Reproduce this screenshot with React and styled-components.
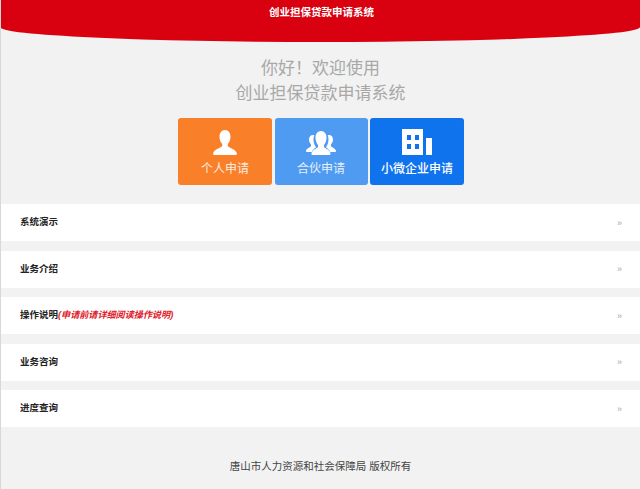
import React from 'react'
import styled, { createGlobalStyle } from 'styled-components'

const Global = createGlobalStyle`
  html, body {
    margin: 0;
    padding: 0;
    background: #f2f2f2;
  }
  body {
    font-family: "Liberation Sans", "Noto Sans CJK SC", sans-serif;
  }
`

const Page = styled.div`
  width: 640px;
  height: 489px;
  overflow: hidden;
  box-sizing: border-box;
  border-left: 1px solid #d8d8d8;
  display: flex;
  flex-direction: column;
  background: #f2f2f2;
`

const Header = styled.header`
  height: 42px;
  margin-left: -1px;
  padding-left: 3px;
  flex: none;
  background: #d9000f;
  border-radius: 0 0 50% 50% / 0 0 15px 15px;
  color: #fff;
  font-size: 10.5px;
  font-weight: 700;
  line-height: 24px;
  text-align: center;
`

const Welcome = styled.div`
  margin-top: 14px;
  color: #a8a8a8;
  font-size: 17px;
  line-height: 25px;
  text-align: center;
`

const Buttons = styled.div`
  margin-top: 12px;
  display: flex;
  justify-content: center;
  gap: 2.5px;
  padding-left: 1px;
`

const Tile = styled.div`
  width: ${p => p.$w || 94}px;
  height: 67px;
  border-radius: 3px;
  background: ${p => p.$bg};
  color: #fff;
  display: flex;
  flex-direction: column;
  align-items: center;
  box-sizing: border-box;
  padding-top: 11px;
`

const TileIcon = styled.svg`
  width: 30px;
  height: 27px;
  fill: #fff;
  flex: none;
`

const TileLabel = styled.div`
  margin-top: 5px;
  font-size: 12px;
  line-height: 16px;
  font-weight: ${p => p.$soft ? 400 : 500};
  opacity: ${p => p.$soft ? 0.85 : 1};
`

const Menu = styled.div`
  margin-top: 19px;
  display: flex;
  flex-direction: column;
  gap: 9.5px;
`

const Row = styled.div`
  height: 37px;
  flex: none;
  background: #fff;
  display: flex;
  align-items: center;
  justify-content: space-between;
  padding: 0 18px 0 19px;
`

const RowTitle = styled.div`
  font-size: 9.5px;
  font-weight: 700;
  color: #222;
  margin-top: -3px;
`

const Hint = styled.span`
  color: #e0202a;
  font-size: 9.1px;
  font-style: italic;
`

const Chevron = styled.span`
  color: #a8a8a8;
  font-size: 9px;
`

const Footer = styled.footer`
  margin-top: 31px;
  color: #444;
  font-size: 10.5px;
  text-align: center;
`

const PersonIcon = () => (
  <TileIcon viewBox="0 0 30 27">
    <path d="M15 1c-3.600 0-5.500 3-5.500 6.500 0 3 1 5.500 2.700 7.500v2c0 1.500-7.500 2.500-9 7-.3 1 0 2 1 2h21.600c1 0 1.300-1 1-2-1.500-4.500-9-5.500-9-7v-2c1.700-2 2.700-4.500 2.700-7.500C20.500 4 18.600 1 15 1z" />
  </TileIcon>
)

const GroupIcon = () => (
  <TileIcon viewBox="0 0 30 27">
    <path d="M7 6c-2.500 0-4 2-4 4.500 0 2 .8 3.500 2 5v1.500C5 18 1 19 0 21.500 0 22.500.500 23 1 23h5c.5-2 2-3.500 4-4.500-1.500-2.500-2.500-5-2.500-8 0-1.500.2-3 .8-4.300C8 6 7.500 6 7 6zM23 6c-.5 0-1 0-1.300.2.600 1.300.800 2.800.800 4.300 0 3-1 5.500-2.500 8 2 1 3.500 2.500 4 4.500h5c.5 0 1-.5 1-1.500C29 19 25 18 25 17v-1.500c1.200-1.500 2-3 2-5C27 8 25.500 6 23 6z" />
    <path d="M15 2c-3.500 0-5.500 3-5.500 6.500 0 3 1 5.500 2.500 7.500v2c0 1-5 2-6.500 6-.2 1 .2 2 1 2h17c.8 0 1.200-1 1-2-1.500-4-6.500-5-6.500-6v-2c1.500-2 2.500-4.500 2.500-7.500C20.500 5 18.500 2 15 2z" />
  </TileIcon>
)

const BuildingIcon = () => (
  <TileIcon viewBox="0 0 30 27">
    <path fillRule="evenodd" d="M0 0h21v26H0zM5 6v5h4V6zm8 0v5h4V6zM5 15v5h4v-5zm8 0v5h4v-5z" />
    <path d="M24 9h6v17h-6z" />
  </TileIcon>
)

const rows = [
  { title: '系统演示' },
  { title: '业务介绍' },
  { title: '操作说明', hint: '(申请前请详细阅读操作说明)' },
  { title: '业务咨询' },
  { title: '进度查询' },
]

export default function App() {
  return (
    <Page>
      <Global />
      <Header>创业担保贷款申请系统</Header>
      <Welcome>
        <div>你好！欢迎使用</div>
        <div>创业担保贷款申请系统</div>
      </Welcome>
      <Buttons>
        <Tile $bg="#f97f28">
          <PersonIcon />
          <TileLabel $soft>个人申请</TileLabel>
        </Tile>
        <Tile $bg="#4f9bf2" $w={93}>
          <GroupIcon />
          <TileLabel $soft>合伙申请</TileLabel>
        </Tile>
        <Tile $bg="#0f73ee">
          <BuildingIcon />
          <TileLabel>小微企业申请</TileLabel>
        </Tile>
      </Buttons>
      <Menu>
        {rows.map(r => (
          <Row key={r.title}>
            <RowTitle>
              {r.title}
              {r.hint && <Hint>{r.hint}</Hint>}
            </RowTitle>
            <Chevron>»</Chevron>
          </Row>
        ))}
      </Menu>
      <Footer>唐山市人力资源和社会保障局 版权所有</Footer>
    </Page>
  )
}
